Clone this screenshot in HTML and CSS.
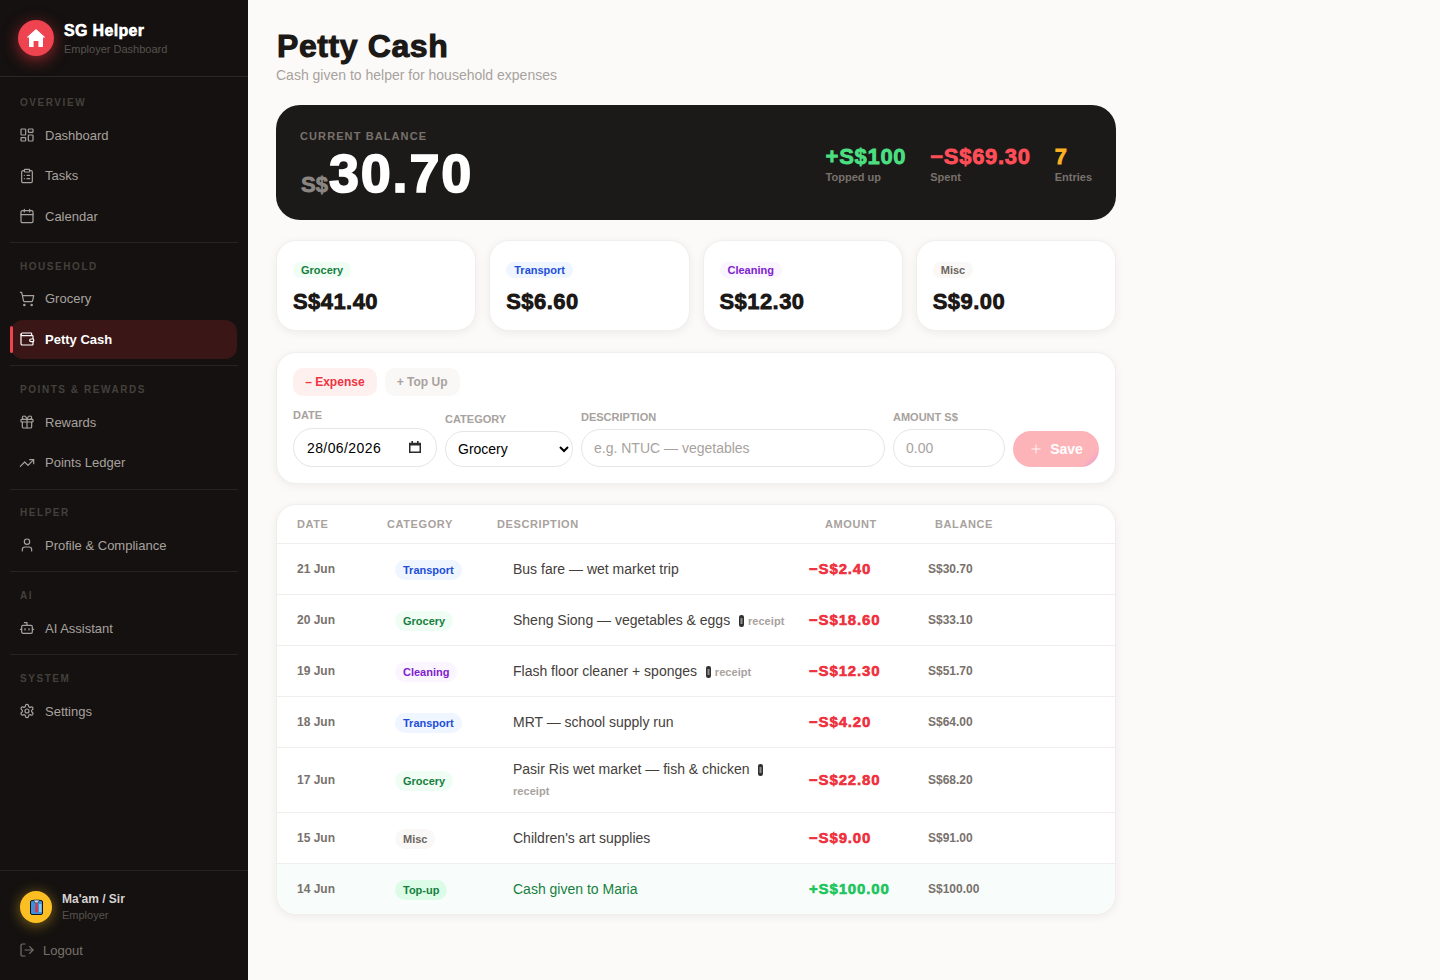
FILE: index.html
```html
<!DOCTYPE html>
<html lang="en-GB">
<head>
<meta charset="utf-8">
<title>Petty Cash</title>
<link rel="stylesheet" href="styles.css">
</head>
<body>
<svg class="defs" aria-hidden="true">
  <symbol id="i-dash" viewBox="0 0 24 24"><rect x="3" y="3" width="7" height="9" rx="1"/><rect x="14" y="3" width="7" height="5" rx="1"/><rect x="14" y="12" width="7" height="9" rx="1"/><rect x="3" y="16" width="7" height="5" rx="1"/></symbol>
  <symbol id="i-tasks" viewBox="0 0 24 24"><rect x="8" y="2" width="8" height="4" rx="1"/><path d="M16 4h2a2 2 0 0 1 2 2v14a2 2 0 0 1-2 2H6a2 2 0 0 1-2-2V6a2 2 0 0 1 2-2h2"/><path d="M12 11h4M12 16h4M8 11h.01M8 16h.01"/></symbol>
  <symbol id="i-cal" viewBox="0 0 24 24"><path d="M8 2v4M16 2v4"/><rect x="3" y="4" width="18" height="18" rx="2"/><path d="M3 10h18"/></symbol>
  <symbol id="i-cart" viewBox="0 0 24 24"><circle cx="8" cy="21" r="1"/><circle cx="19" cy="21" r="1"/><path d="M2.05 2.05h2l2.66 12.42a2 2 0 0 0 2 1.58h9.78a2 2 0 0 0 1.95-1.57l1.65-7.43H5.12"/></symbol>
  <symbol id="i-wallet" viewBox="0 0 24 24"><path d="M19 7V4a1 1 0 0 0-1-1H5a2 2 0 0 0 0 4h15a1 1 0 0 1 1 1v4h-3a2 2 0 0 0 0 4h3a1 1 0 0 0 1-1v-2a1 1 0 0 0-1-1"/><path d="M3 5v14a2 2 0 0 0 2 2h15a1 1 0 0 0 1-1v-4"/></symbol>
  <symbol id="i-gift" viewBox="0 0 24 24"><rect x="3" y="8" width="18" height="4" rx="1"/><path d="M12 8v13"/><path d="M19 12v7a2 2 0 0 1-2 2H7a2 2 0 0 1-2-2v-7"/><path d="M7.5 8a2.5 2.5 0 0 1 0-5A4.8 8 0 0 1 12 8a4.8 8 0 0 1 4.5-5 2.5 2.5 0 0 1 0 5"/></symbol>
  <symbol id="i-trend" viewBox="0 0 24 24"><path d="M22 7l-8.5 8.5-5-5L2 17"/><path d="M16 7h6v6"/></symbol>
  <symbol id="i-user" viewBox="0 0 24 24"><path d="M19 21v-2a4 4 0 0 0-4-4H9a4 4 0 0 0-4 4v2"/><circle cx="12" cy="7" r="4"/></symbol>
  <symbol id="i-bot" viewBox="0 0 24 24"><path d="M12 8V4H8"/><rect x="4" y="8" width="16" height="12" rx="2"/><path d="M2 14h2M20 14h2M15 13v2M9 13v2"/></symbol>
  <symbol id="i-gear" viewBox="0 0 24 24"><path d="M12.22 2h-.44a2 2 0 0 0-2 2v.18a2 2 0 0 1-1 1.73l-.43.25a2 2 0 0 1-2 0l-.15-.08a2 2 0 0 0-2.73.73l-.22.38a2 2 0 0 0 .73 2.73l.15.1a2 2 0 0 1 1 1.72v.51a2 2 0 0 1-1 1.74l-.15.09a2 2 0 0 0-.73 2.73l.22.38a2 2 0 0 0 2.73.73l.15-.08a2 2 0 0 1 2 0l.43.25a2 2 0 0 1 1 1.73V20a2 2 0 0 0 2 2h.44a2 2 0 0 0 2-2v-.18a2 2 0 0 1 1-1.73l.43-.25a2 2 0 0 1 2 0l.15.08a2 2 0 0 0 2.73-.73l.22-.39a2 2 0 0 0-.73-2.73l-.15-.08a2 2 0 0 1-1-1.74v-.5a2 2 0 0 1 1-1.74l.15-.09a2 2 0 0 0 .73-2.73l-.22-.38a2 2 0 0 0-2.73-.73l-.15.08a2 2 0 0 1-2 0l-.43-.25a2 2 0 0 1-1-1.73V4a2 2 0 0 0-2-2z"/><circle cx="12" cy="12" r="3"/></symbol>
  <symbol id="i-out" viewBox="0 0 24 24"><path d="M9 21H5a2 2 0 0 1-2-2V5a2 2 0 0 1 2-2h4"/><path d="M16 17l5-5-5-5"/><path d="M21 12H9"/></symbol>
  <symbol id="i-plus" viewBox="0 0 24 24"><path d="M5 12h14M12 5v14"/></symbol>
  <symbol id="i-clip" viewBox="0 0 5 12"><rect width="5" height="12" rx="2.2" fill="#303030"/><rect x="1.5" y="3" width="2" height="6" fill="#8f8f8f"/></symbol>
</svg>

<div class="app">
  <aside class="sidebar">
    <div class="brand">
      <div class="logo">
        <svg class="logo-house" viewBox="0 0 20 20"><path d="M10 1 L19.4 9.6 L17 9.6 L17 19 L12.4 19 L12.4 13 L7.6 13 L7.6 19 L3 19 L3 9.6 L0.6 9.6 Z"/></svg>
      </div>
      <div>
        <div class="brand-name">SG Helper</div>
        <div class="brand-sub">Employer Dashboard</div>
      </div>
    </div>

    <nav class="nav">
      <section class="nav-sec">
        <div class="nav-label">Overview</div>
        <a class="nav-item"><svg class="ico"><use href="#i-dash"/></svg>Dashboard</a>
        <a class="nav-item"><svg class="ico"><use href="#i-tasks"/></svg>Tasks</a>
        <a class="nav-item"><svg class="ico"><use href="#i-cal"/></svg>Calendar</a>
      </section>
      <section class="nav-sec">
        <div class="nav-label">Household</div>
        <a class="nav-item"><svg class="ico"><use href="#i-cart"/></svg>Grocery</a>
        <a class="nav-item active"><svg class="ico"><use href="#i-wallet"/></svg>Petty Cash</a>
      </section>
      <section class="nav-sec">
        <div class="nav-label">Points &amp; Rewards</div>
        <a class="nav-item"><svg class="ico"><use href="#i-gift"/></svg>Rewards</a>
        <a class="nav-item"><svg class="ico"><use href="#i-trend"/></svg>Points Ledger</a>
      </section>
      <section class="nav-sec">
        <div class="nav-label">Helper</div>
        <a class="nav-item"><svg class="ico"><use href="#i-user"/></svg>Profile &amp; Compliance</a>
      </section>
      <section class="nav-sec">
        <div class="nav-label">AI</div>
        <a class="nav-item"><svg class="ico"><use href="#i-bot"/></svg>AI Assistant</a>
      </section>
      <section class="nav-sec last">
        <div class="nav-label">System</div>
        <a class="nav-item"><svg class="ico"><use href="#i-gear"/></svg>Settings</a>
      </section>
    </nav>

    <div class="side-foot">
      <div class="who">
        <div class="avatar">
          <svg class="shirt" viewBox="0 0 13 16">
            <rect x=".5" y="1.5" width="12" height="14" rx="1.5" fill="#3d8fdc" stroke="#10141c"/>
            <rect x="9" y="5" width="2.6" height="8" fill="#8ec4f0"/>
            <path d="M3.5 1h6L8 4H5z" fill="#bcdcf5" stroke="#10141c" stroke-width=".6"/>
            <path d="M5.6 4h1.8l.6 8-1.5 2-1.5-2z" fill="#e0353c"/>
          </svg>
        </div>
        <div>
          <div class="who-name">Ma'am / Sir</div>
          <div class="who-role">Employer</div>
        </div>
      </div>
      <a class="logout"><svg class="ico"><use href="#i-out"/></svg>Logout</a>
    </div>
  </aside>

  <main class="main">
    <h1 class="title">Petty Cash</h1>
    <p class="subtitle">Cash given to helper for household expenses</p>

    <section class="hero">
      <div class="hero-left">
        <div class="hero-label">Current Balance</div>
        <div class="hero-amt"><span class="hero-cur">S$</span>30.70</div>
      </div>
      <div class="hero-stats">
        <div><div class="hs-val green">+S$100</div><div class="hs-lab">Topped up</div></div>
        <div><div class="hs-val red">−S$69.30</div><div class="hs-lab">Spent</div></div>
        <div><div class="hs-val amber">7</div><div class="hs-lab">Entries</div></div>
      </div>
    </section>

    <section class="stats">
      <div class="stat"><span class="pill grocery">Grocery</span><div class="stat-val">S$41.40</div></div>
      <div class="stat"><span class="pill transport">Transport</span><div class="stat-val">S$6.60</div></div>
      <div class="stat"><span class="pill cleaning">Cleaning</span><div class="stat-val">S$12.30</div></div>
      <div class="stat"><span class="pill misc">Misc</span><div class="stat-val">S$9.00</div></div>
    </section>

    <section class="card form">
      <div class="tabs">
        <button class="tab on">– Expense</button>
        <button class="tab">+ Top Up</button>
      </div>
      <div class="form-row">
        <label class="field f-date"><span>Date</span><input class="ctl date-ctl" type="text" value="28/06/2026">
          <svg class="date-ico" viewBox="0 0 12 12"><path d="M.75 2.5h10.5v8.75H.75z" fill="none" stroke="#2b2b2b" stroke-width="1.5"/><path d="M0 2h12v2.4H0zM2.4 0h1.6v3H2.4zM8 0h1.6v3H8z" fill="#2b2b2b"/></svg>
        </label>
        <label class="field f-cat"><span>Category</span><select class="ctl"><option>Grocery</option></select></label>
        <label class="field f-desc"><span>Description</span><input class="ctl" type="text" placeholder="e.g. NTUC — vegetables"></label>
        <label class="field f-amt"><span>Amount S$</span><input class="ctl" type="text" placeholder="0.00"></label>
        <button class="save"><svg class="ico plus"><use href="#i-plus"/></svg>Save</button>
      </div>
    </section>

    <section class="card ledger">
      <div class="thead">
        <div>Date</div><div>Category</div><div>Description</div><div>Amount</div><div>Balance</div>
      </div>
      <div class="row">
        <div class="c-date">21 Jun</div><div><span class="pill transport">Transport</span></div>
        <div class="c-desc">Bus fare — wet market trip</div><div class="c-amt neg">−S$2.40</div><div class="c-bal">S$30.70</div>
      </div>
      <div class="row">
        <div class="c-date">20 Jun</div><div><span class="pill grocery">Grocery</span></div>
        <div class="c-desc">Sheng Siong — vegetables &amp; eggs <svg class="clip"><use href="#i-clip"/></svg> <span class="rcpt">receipt</span></div><div class="c-amt neg">−S$18.60</div><div class="c-bal">S$33.10</div>
      </div>
      <div class="row">
        <div class="c-date">19 Jun</div><div><span class="pill cleaning">Cleaning</span></div>
        <div class="c-desc">Flash floor cleaner + sponges <svg class="clip"><use href="#i-clip"/></svg> <span class="rcpt">receipt</span></div><div class="c-amt neg">−S$12.30</div><div class="c-bal">S$51.70</div>
      </div>
      <div class="row">
        <div class="c-date">18 Jun</div><div><span class="pill transport">Transport</span></div>
        <div class="c-desc">MRT — school supply run</div><div class="c-amt neg">−S$4.20</div><div class="c-bal">S$64.00</div>
      </div>
      <div class="row">
        <div class="c-date">17 Jun</div><div><span class="pill grocery">Grocery</span></div>
        <div class="c-desc">Pasir Ris wet market — fish &amp; chicken <svg class="clip"><use href="#i-clip"/></svg> <span class="rcpt">receipt</span></div><div class="c-amt neg">−S$22.80</div><div class="c-bal">S$68.20</div>
      </div>
      <div class="row">
        <div class="c-date">15 Jun</div><div><span class="pill misc">Misc</span></div>
        <div class="c-desc">Children's art supplies</div><div class="c-amt neg">−S$9.00</div><div class="c-bal">S$91.00</div>
      </div>
      <div class="row topup">
        <div class="c-date">14 Jun</div><div><span class="pill top">Top-up</span></div>
        <div class="c-desc">Cash given to Maria</div><div class="c-amt pos">+S$100.00</div><div class="c-bal">S$100.00</div>
      </div>
    </section>
  </main>
</div>
</body>
</html>
```
FILE: styles.css
```css
* { box-sizing: border-box; }
html, body { margin: 0; height: 100%; }
body {
  font-family: "Liberation Sans", Arial, sans-serif;
  font-size: 14px;
  background: #fbfaf8;
  color: #1c1917;
  overflow: hidden;
}
.defs { display: none; }
.app { display: flex; height: 980px; }

.ico {
  width: 16px; height: 16px; flex: none;
  fill: none; stroke: currentColor; stroke-width: 1.8;
  stroke-linecap: round; stroke-linejoin: round;
}

/* sidebar */
.sidebar {
  width: 248px; flex: none;
  background: #141110;
  display: flex; flex-direction: column;
}
.brand {
  height: 77px; flex: none;
  border-bottom: 1px solid #2a2725;
  display: flex; align-items: center; gap: 10px;
  padding: 0 18px 1px;
}
.logo {
  width: 36px; height: 36px; border-radius: 50%;
  background: #ef4350;
  box-shadow: 0 4px 16px rgba(239, 50, 60, .6);
  display: flex; align-items: center; justify-content: center;
  flex: none;
}
.logo-house { width: 20px; height: 20px; fill: #fff; }
.brand-name { font-size: 16px; font-weight: 1000; letter-spacing: .33px; color: #fff; line-height: 18px; margin-top: 2px; }
.brand-sub { font-size: 11px; font-weight: 400; color: #57534e; line-height: 13px; margin-top: 3px; }

.nav { flex: 1; padding-top: 2.25px; }
.nav-sec { padding: 0 11px; }
.nav-sec::after {
  content: ""; display: block; height: 1px;
  background: #262321; margin: 6.7px -1px 0;
}
.nav-sec.last::after { display: none; }
.nav-label {
  font-size: 10px; font-weight: 700; letter-spacing: 1.55px;
  text-transform: uppercase; color: #44403c;
  line-height: 13px; padding: 16.6px 9px 0; margin-bottom: 7px;
}
.nav-item {
  height: 38.5px; margin-bottom: 2px;
  display: flex; align-items: center; gap: 10px;
  padding-left: 8px;
  color: #a8a29e; font-size: 13px;
  border-radius: 12px; position: relative;
}
.nav-item.active { background: #3a1716; color: #fff; font-weight: 700; }
.nav-item.active::before {
  content: ""; position: absolute; left: -1px; top: 6px; bottom: 6px;
  width: 3px; background: #ef4350; border-radius: 2px;
}

.side-foot { height: 110px; flex: none; border-top: 1px solid #262321; padding: 20px 20px 0; }
.who { display: flex; align-items: center; gap: 10px; }
.avatar {
  width: 32px; height: 32px; border-radius: 50%; flex: none;
  background: #fbbf24;
  box-shadow: 0 2px 14px rgba(251, 191, 36, .5);
  display: flex; align-items: center; justify-content: center;
}
.shirt { width: 13px; height: 16px; }
.who-name { font-size: 12px; font-weight: 700; color: #d6d3d1; line-height: 14px; }
.who-role { font-size: 11px; color: #57534e; line-height: 13px; margin-top: 3px; }
.logout {
  display: flex; align-items: center; gap: 8px;
  margin-top: 17px; height: 20px;
  color: #78716c; font-size: 13px;
  margin-left: -1px;
}

/* main */
.main { flex: 1; padding: 28px 0 0 28px; min-width: 0; }
.main > * { width: 840px; }
.title { margin: 0; padding-left: 1px; font-size: 32px; font-weight: 1000; letter-spacing: .6px; line-height: 36px; color: #1c1917; }
.subtitle { margin: 3px 0 22px; font-size: 14px; line-height: 16px; color: #a8a29e; }

.hero {
  height: 115px; background: #1c1a19; border-radius: 24px;
  padding: 25px 24px 0; display: flex; justify-content: space-between; align-items: flex-start;
}
.hero-label {
  font-size: 11px; font-weight: 700; letter-spacing: 1.1px; text-transform: uppercase;
  color: #78716c; line-height: 13px;
}
.hero-amt {
  font-size: 54px; font-weight: 1000; letter-spacing: 1.8px; color: #fff; line-height: 54px; margin-top: 3px; padding-left: 1px;
}
.hero-cur { font-size: 22px; letter-spacing: 0; color: #8a8580; margin-right: 1px; }
.hero-stats { display: flex; gap: 24px; padding-top: 14px; }
.hs-val { font-size: 22px; font-weight: 1000; letter-spacing: .7px; line-height: 26px; }
.hs-lab { font-size: 11px; font-weight: 700; color: #78716c; line-height: 13px; margin-top: 1px; }
.green { color: #4ade80; } .red { color: #ff4d57; } .amber { color: #fbb024; }

.stats { display: grid; grid-template-columns: repeat(4, 1fr); gap: 13px; margin-top: 20px; }
.stat {
  height: 91px; background: #fff; border: 1px solid #f1efed; border-radius: 20px;
  padding: 21px 16px 0;
  box-shadow: 0 2px 10px rgba(0, 0, 0, .06);
}
.pill {
  display: inline-block; font-size: 11px; font-weight: 700;
  padding: 0 8px; border-radius: 10px; line-height: 16px; vertical-align: top;
}
.stat-val { font-size: 22px; font-weight: 1000; letter-spacing: .43px; line-height: 26px; margin-top: 11px; }
.grocery { background: #f0fdf4; color: #15803d; }
.transport { background: #eff6ff; color: #1d4ed8; }
.cleaning { background: #faf5ff; color: #7e22ce; }
.misc { background: #faf8f6; color: #6b6560; }
.top { background: #dcfce7; color: #15803d; }

.card {
  background: #fff; border: 1px solid #f1efed; border-radius: 20px;
  box-shadow: 0 2px 10px rgba(0, 0, 0, .06);
}
.form { margin-top: 21px; padding: 15px 16px 16px; height: 132px; }
.tabs { display: flex; gap: 8px; }
.tab {
  height: 28px; padding: 0 12px; border: 0; border-radius: 10px;
  font: 700 12px "Liberation Sans", Arial, sans-serif;
  background: #faf8f6; color: #a8a29e;
}
.tab.on { background: #fff0f0; color: #ef3340; padding: 0 12.2px; }
.form-row { display: flex; align-items: flex-end; gap: 8px; margin-top: 13px; }
.field { display: flex; flex-direction: column; gap: 5px; position: relative; }
.field > span {
  font-size: 11px; font-weight: 700; text-transform: uppercase; color: #a8a29e; line-height: 13px;
}
.ctl {
  width: 100%; border: 1px solid #e7e5e4; border-radius: 20px;
  background: #fff; font: 14px "Liberation Sans", Arial, sans-serif; color: #1c1917;
  padding: 10px 12px; outline: none;
}
.ctl::placeholder { color: #a8a29e; }
.f-date { gap: 6px; }
.date-ctl { height: 39px; color: #000; padding-left: 13px; letter-spacing: .4px; }
.date-ico { position: absolute; right: 16px; bottom: 14px; width: 12px; height: 12px; }
.f-date { width: 144px; } .f-cat { width: 128px; } .f-desc { width: 304px; } .f-amt { width: 112px; }
.f-cat .ctl { height: 36px; padding: 0 8px; color: #000; }
.save {
  width: 86px; height: 36px; border: 0; border-radius: 20px;
  background: linear-gradient(135deg, #fdb4b8 84%, #f3a8c6 90%, #fdb4b8 96%);
  color: #fff;
  font: 700 14px "Liberation Sans", Arial, sans-serif;
  display: flex; align-items: center; justify-content: center; gap: 7px;
}
.plus { width: 14px; height: 14px; stroke-width: 1.5; }

.ledger { margin-top: 20px; overflow: hidden; height: 411px; }
.thead {
  display: grid; grid-template-columns: 90px 110px 328px 110px 1fr;
  padding: 0 20px; height: 39px; align-items: center;
  font-size: 11px; font-weight: 700; letter-spacing: .6px; text-transform: uppercase; color: #a8a29e;
  border-bottom: 1px solid #f0eeec;
}
.row {
  display: grid; grid-template-columns: 90px 110px 288px 111px 1fr; column-gap: 8px;
  padding: 0 20px; min-height: 51px; align-items: center;
  border-bottom: 1px solid #f0eeec;
}
.row:last-child { border-bottom: 0; min-height: 50px; }
.row.topup { background: #f8fdfb; }
.row .pill { line-height: 20px; margin-top: 2px; }
.c-date { font-size: 12px; font-weight: 700; color: #78716c; }
.c-desc { font-size: 14px; color: #44403c; line-height: 21px; padding: 11px 0; }
.topup .c-desc { color: #15803d; }
.c-amt { font-size: 15px; font-weight: 1000; letter-spacing: .85px; padding-bottom: 2px; }
.neg { color: #ef3340; } .pos { color: #22c55e; }
.c-bal { font-size: 12px; font-weight: 700; color: #78716c; }
.clip { width: 5px; height: 12px; margin-left: 5px; vertical-align: -2px; }
.rcpt { font-size: 11px; font-weight: 700; letter-spacing: .05px; line-height: 1; color: #a8a29e; }
```
